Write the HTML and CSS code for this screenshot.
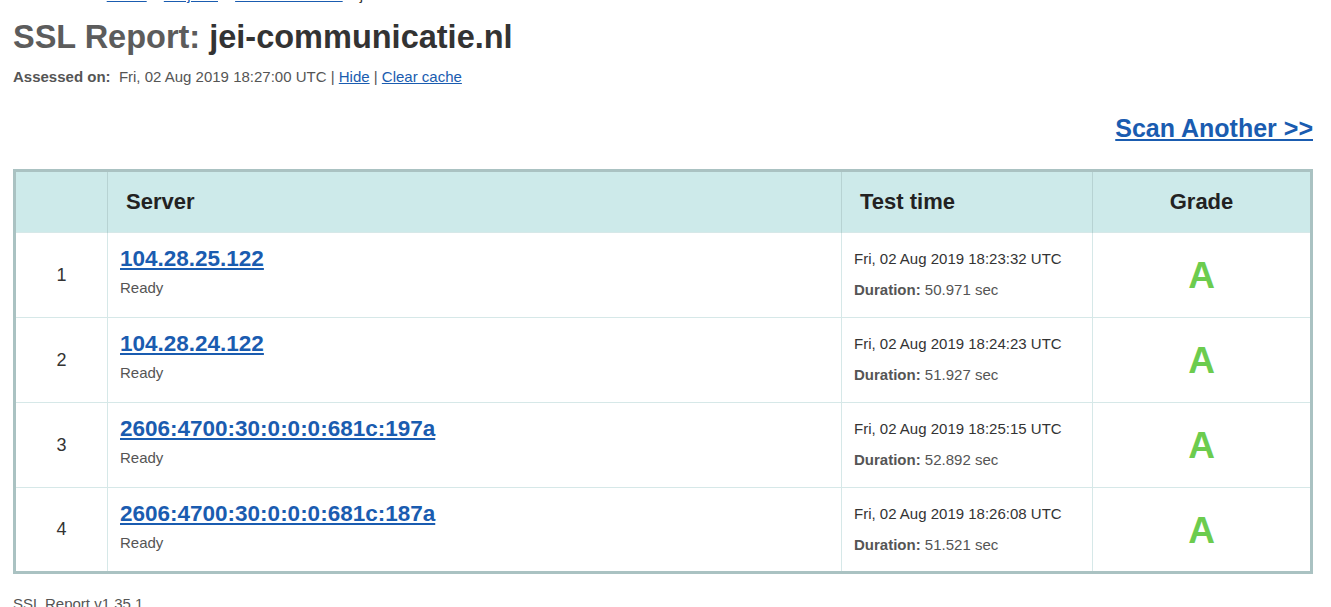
FILE: index.html
```html
<!DOCTYPE html>
<html>
<head>
<meta charset="utf-8">
<link rel="stylesheet" href="styles.css">
</head>
<body>
<div class="page">
  <div class="crumbs">You are here: <a href="#">Home</a> &gt; <a href="#">Projects</a> &gt; <a href="#">SSL Server Test</a> &gt; jei-communicatie.nl</div>
  <h1 class="title"><span class="lead">SSL Report:</span> jei-communicatie.nl</h1>
  <div class="assessed"><b>Assessed on:</b>&nbsp; Fri, 02 Aug 2019 18:27:00 UTC | <a href="#">Hide</a> | <a href="#">Clear cache</a></div>
  <div class="another"><a href="#">Scan Another &gt;&gt;</a></div>
  <table class="report">
    <thead>
      <tr>
        <th class="c-num"></th>
        <th class="c-server">Server</th>
        <th class="c-time">Test time</th>
        <th class="c-grade">Grade</th>
      </tr>
    </thead>
    <tbody>
      <tr>
        <td class="c-num">1</td>
        <td class="c-server"><a class="ip" href="#">104.28.25.122</a><div class="status">Ready</div></td>
        <td class="c-time"><div class="when">Fri, 02 Aug 2019 18:23:32 UTC</div><div class="dur"><b>Duration:</b> 50.971 sec</div></td>
        <td class="c-grade"><span class="grade">A</span></td>
      </tr>
      <tr>
        <td class="c-num">2</td>
        <td class="c-server"><a class="ip" href="#">104.28.24.122</a><div class="status">Ready</div></td>
        <td class="c-time"><div class="when">Fri, 02 Aug 2019 18:24:23 UTC</div><div class="dur"><b>Duration:</b> 51.927 sec</div></td>
        <td class="c-grade"><span class="grade">A</span></td>
      </tr>
      <tr>
        <td class="c-num">3</td>
        <td class="c-server"><a class="ip" href="#">2606:4700:30:0:0:0:681c:197a</a><div class="status">Ready</div></td>
        <td class="c-time"><div class="when">Fri, 02 Aug 2019 18:25:15 UTC</div><div class="dur"><b>Duration:</b> 52.892 sec</div></td>
        <td class="c-grade"><span class="grade">A</span></td>
      </tr>
      <tr>
        <td class="c-num">4</td>
        <td class="c-server"><a class="ip" href="#">2606:4700:30:0:0:0:681c:187a</a><div class="status">Ready</div></td>
        <td class="c-time"><div class="when">Fri, 02 Aug 2019 18:26:08 UTC</div><div class="dur"><b>Duration:</b> 51.521 sec</div></td>
        <td class="c-grade"><span class="grade">A</span></td>
      </tr>
    </tbody>
  </table>
  <div class="footer">SSL Report v1.35.1</div>
</div>
</body>
</html>
```

FILE: styles.css
```css
html, body {
  margin: 0;
  padding: 0;
  background: #ffffff;
}
body {
  font-family: "Liberation Sans", Arial, sans-serif;
  color: #333333;
  overflow: hidden;
}
a {
  color: #1a5cb0;
}
.page {
  width: 1300px;
  padding-left: 13px;
}
.crumbs {
  font-size: 15px;
  line-height: 16px;
  margin-top: -13px;
  color: #333;
}
.title {
  margin: 15px 0 0 0;
  font-size: 32.5px;
  line-height: 38px;
  font-weight: bold;
  color: #333333;
}
.title .lead {
  color: #5c5c5c;
}
.assessed {
  margin-top: 12px;
  font-size: 15px;
  line-height: 18px;
  color: #555555;
}
.assessed b {
  color: #555555;
}
.another {
  text-align: right;
  margin-top: 28px;
  font-size: 25px;
  line-height: 28px;
  font-weight: bold;
}
.another a {
  color: #1a5cb0;
}
.report {
  margin-top: 27px;
  width: 1300px;
  border-collapse: collapse;
  border: 3px solid #aac2c2;
  table-layout: fixed;
}
.report th,
.report td {
  box-sizing: border-box;
}
.report th {
  background: #cdeaea;
  height: 62px;
  font-size: 22px;
  font-weight: bold;
  color: #222222;
  border-left: 1px solid #b7d3d3;
  padding: 0;
}
.report td {
  height: 85px;
  border-top: 1px solid #d6e8e8;
  border-left: 1px solid #d6e8e8;
  padding: 0;
  vertical-align: top;
}
.report .c-num {
  width: 93px;
  text-align: center;
  font-size: 18px;
  color: #333;
}
.report th.c-num {
  border-left: none;
}
.report td.c-num {
  border-left: none;
  vertical-align: middle;
}
.report .c-server {
  width: 734px;
  text-align: left;
}
.report th.c-server {
  padding-left: 18px;
}
.report td.c-server {
  padding: 13px 0 0 12px;
}
.report .c-time {
  width: 251px;
  text-align: left;
}
.report th.c-time {
  padding-left: 18px;
}
.report td.c-time {
  padding: 17px 0 0 12px;
}
.report .c-grade {
  text-align: center;
}
.report td.c-grade {
  vertical-align: middle;
}
.ip {
  font-size: 22.5px;
  line-height: 26px;
  font-weight: bold;
  color: #1a5cb0;
}
.status {
  margin-top: 7px;
  font-size: 15px;
  line-height: 18px;
  color: #555555;
}
.when {
  font-size: 15px;
  line-height: 18px;
  color: #333333;
}
.dur {
  margin-top: 13px;
  font-size: 15px;
  line-height: 18px;
  color: #555555;
}
.grade {
  display: inline-block;
  font-size: 37px;
  line-height: 40px;
  font-weight: bold;
  color: #6ccc4e;
  padding-top: 2px;
}
.footer {
  margin-top: 21px;
  font-size: 15px;
  color: #555555;
}
```
